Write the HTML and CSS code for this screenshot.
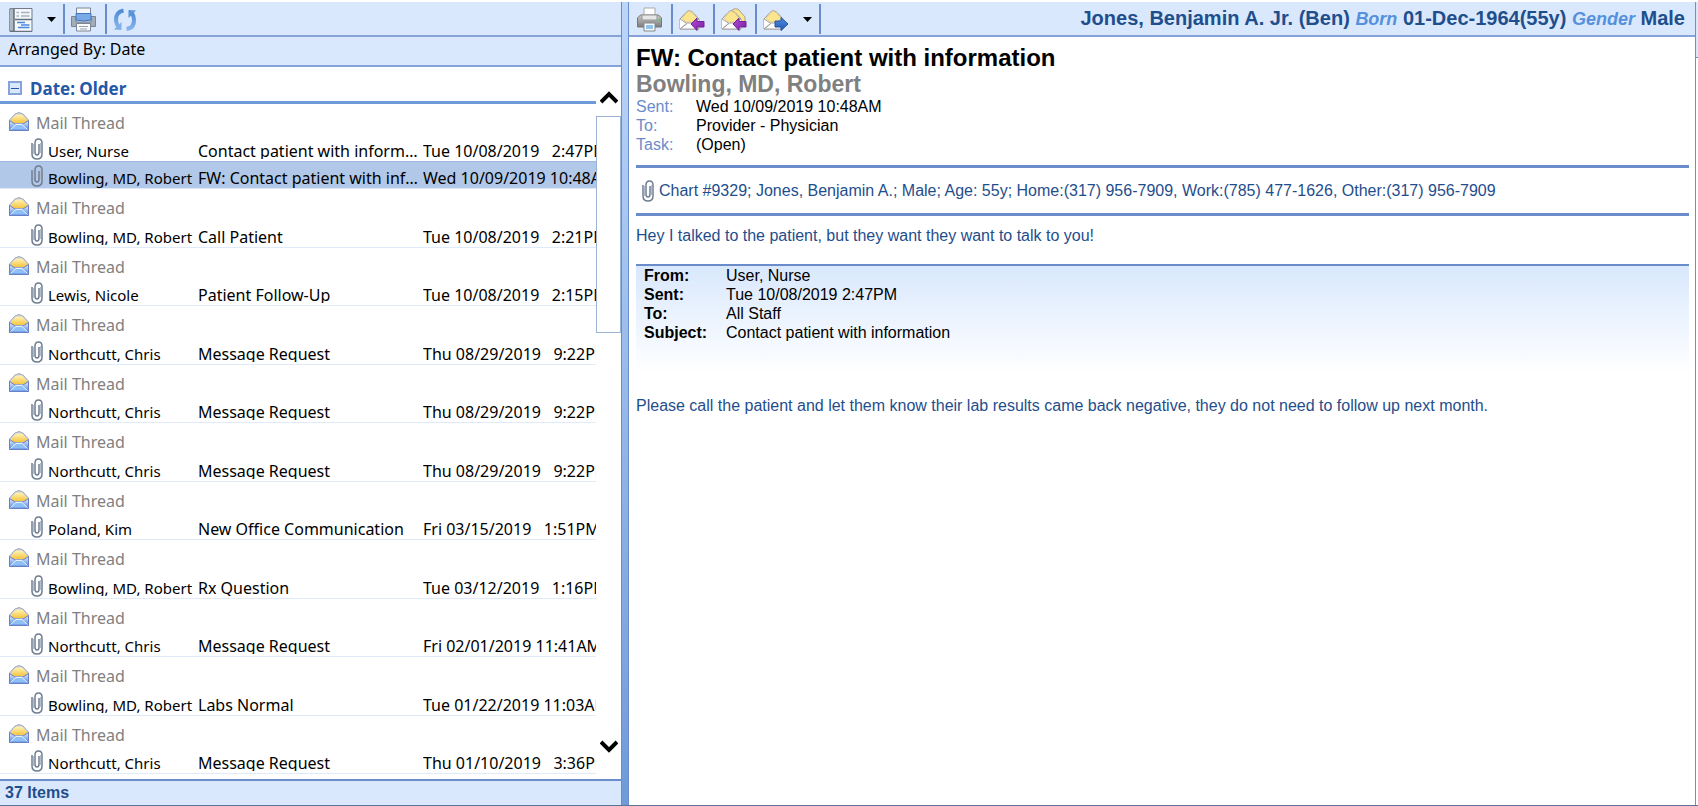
FILE: index.html
```html
<!DOCTYPE html>
<html lang="en">
<head>
<meta charset="utf-8">
<title>Mail</title>
<link rel="stylesheet" href="styles.css">
</head>
<body>
<svg class="defs" aria-hidden="true">
  <defs>
    <linearGradient id="gBlue" x1="0" y1="0" x2="0" y2="1"><stop offset="0" stop-color="#e2f2ff"/><stop offset="1" stop-color="#4f80da"/></linearGradient>
    <linearGradient id="gGold" x1="0" y1="0" x2="0" y2="1"><stop offset="0" stop-color="#fff3b8"/><stop offset="1" stop-color="#f5c540"/></linearGradient>
    <linearGradient id="gPurple" x1="0" y1="0" x2="1" y2="1"><stop offset="0" stop-color="#b04fd8"/><stop offset="1" stop-color="#7a1ea3"/></linearGradient>
    <linearGradient id="gArrow" x1="0" y1="0" x2="0" y2="1"><stop offset="0" stop-color="#4d92e2"/><stop offset="1" stop-color="#2358b4"/></linearGradient>
    <linearGradient id="gGrey" x1="0" y1="0" x2="0" y2="1"><stop offset="0" stop-color="#c9c9c9"/><stop offset="1" stop-color="#7d7d7d"/></linearGradient>
    <linearGradient id="gRefresh" x1="0" y1="0" x2="0" y2="1"><stop offset="0" stop-color="#4f8bd6"/><stop offset="1" stop-color="#86b4ea"/></linearGradient>
  </defs>
  <symbol id="mail" viewBox="0 0 20 20">
    <path d="M.5 8 6 2Q10-1 14 2L19.500 8V18.500H.5Z" fill="#c9cfdb" stroke="#a3abba"/>
    <path d="M2 7.500 7 2.500H13L18 7.500V11H2Z" fill="url(#gGold)"/>
    <path d="M.5 8.500 6 12H14L19.500 8.500V18.500H.5Z" fill="url(#gBlue)" stroke="#6a7fc8"/>
    <path d="M1.500 17.500 7 12.500H13L18.500 17.500" fill="#8fc0f5" stroke="#e6f2ff"/>
  </symbol>
  <symbol id="clip" viewBox="0 0 12 22">
    <path d="M1 5V16Q1 21 6 21T11 16V5Q11 1 7.500 1T4 5V14Q4 17 6 17T8 14V6" fill="none" stroke="#6f7d92" stroke-width="1.500"/>
    <path d="M2.500 6V16M9.500 5V15" stroke="#b3bcc9" fill="none"/>
  </symbol>
  <symbol id="letter" viewBox="0 0 26 24">
    <path d="M1 11 7 4.500Q10 1 14 4.500L20 11V21H1Z" fill="#f4f4f4" stroke="#999"/>
    <path d="M3 10.500 8 4.500Q10.500 2.500 13 4.500L18 10.500 14 14H7Z" fill="#fbe68e" stroke="#ead08a"/>
    <path d="M1 11 8 15.500 1 21M20 11 13 15.500 20 21M1 21 8 15H13L20 21Z" fill="#fff" stroke="#a5a5a5"/>
  </symbol>
</svg>
<main class="app">
  <section class="list-pane" aria-label="Messages">
    <div class="toolbar">
      <button class="tool plain" aria-label="View"><svg width="24" height="24" viewBox="0 0 24 24"><path d="M1 .5H23V23.500H1Z" fill="#f3f8fd" stroke="#717a86"/><path d="M.5 1H4.500V23H.5Z" fill="#aeb8c3" stroke="#8d97a3"/><path d="M5 1V23M6 11.500H23M1 23.500H23" stroke="#68717d" stroke-width="1.500"/><path d="M7.500 4.500H10M12 4.500H20.500M7.500 8H10M12 8H20.500" stroke="#a9b1ba" stroke-width="1.500"/><path d="M8 14.500H16M9 19.500H20.500M12 17H20.500" stroke="#4c86dd" stroke-width="1.500"/></svg></button>
      <button class="tool drop" aria-label="View options"><svg width="10" height="6" viewBox="0 0 10 6"><path d="M0 0H9L4.500 5Z"/></svg></button>
      <button class="tool" aria-label="Print list"><svg width="25" height="25" viewBox="0 0 25 25"><path d="M.5 9.500H5V15H20V9.500H24.500V19.500H.5Z" fill="#a3adb9" stroke="#7c8795"/><path d="M5.500 1H19.500V9H5.500Z" fill="#f4f8fd" stroke="#7b8796"/><path d="M5 6.500H20V13Q12.500 15 5 13Z" fill="#7aa9e8" stroke="#4474bd"/><path d="M5.500 16.500H19.500V24H5.500Z" fill="#fafbfd" stroke="#7b8796"/><path d="M8 19.500H17M9 22H16" stroke="#97a1ad"/></svg></button>
      <button class="tool plain" aria-label="Refresh"><svg width="24" height="24" viewBox="0 0 24 24"><path d="M10.500 2.500Q2.500 4 3 12.500 3.500 17 5.500 19" fill="none" stroke="url(#gRefresh)" stroke-width="4"/><path d="M1 21.500 8.500 22V14Z" fill="#7fb0e8"/><path d="M13.500 21Q21.500 20 21 11.500 20.500 7 18.500 5" fill="none" stroke="url(#gRefresh)" stroke-width="4"/><path d="M15.500 2 23 2.500 15.500 10Z" fill="#5b94da"/></svg></button>
    </div>
    <div class="arranged">Arranged By: Date</div>
    <div class="list-area">
      <div class="threads">
        <h2 class="group"><button class="collapse" aria-label="Collapse"></button>Date: Older</h2>
        <div id="rows"></div>
      </div>
      <div class="scroll">
        <button class="arrow" aria-label="Scroll up"><svg width="18" height="14" viewBox="0 0 18 14"><path d="M1 12 9 4 17 12" fill="none" stroke="#000" stroke-width="4"/></svg></button>
        <div class="thumb"></div>
        <button class="arrow down" aria-label="Scroll down"><svg width="18" height="14" viewBox="0 0 18 14"><path d="M1 2 9 10 17 2" fill="none" stroke="#000" stroke-width="4"/></svg></button>
      </div>
    </div>
    <footer class="count">37 Items</footer>
  </section>
  <div class="splitter"></div>
  <section class="read-pane" aria-label="Message">
    <div class="toolbar">
      <button class="tool first" aria-label="Print"><svg width="25" height="25" viewBox="0 0 25 25"><path d="M7 1H18V9H7Z" fill="#fff" stroke="#aaa"/><path d="M3.500 8H21.500L24.500 11V20H.5V11Z" fill="url(#gGrey)" stroke="#777"/><path d="M5 8H20V13H5Z" fill="#e6e6e6" stroke="#999"/><path d="M21.500 13h2" stroke="#43d05a" stroke-width="2"/><path d="M7 16H18V24H7Z" fill="#f4f9ff" stroke="#888"/><path d="M9 18H16V22H9Z" fill="#8fc4ee"/></svg></button>
      <button class="tool" aria-label="Reply"><svg width="26" height="24" viewBox="0 0 26 24"><use href="#letter"/><path d="M12 16 18 10V13.500H25V19H18V22.500Z" fill="url(#gPurple)" stroke="#74209a"/></svg></button>
      <button class="tool" aria-label="Reply all"><svg width="26" height="24" viewBox="0 0 26 24"><path d="M10 3Q14-1 18 2L24 9V17H14Z" fill="#fbe68e" stroke="#a8a294"/><use href="#letter"/><path d="M12 16 18 10V13.500H25V19H18V22.500Z" fill="url(#gPurple)" stroke="#74209a"/></svg></button>
      <button class="tool plain" aria-label="Forward"><svg width="26" height="24" viewBox="0 0 26 24"><use href="#letter"/><path d="M25 16 18 9.500V13H12V19H18V22.500Z" fill="url(#gArrow)" stroke="#2453a0"/></svg></button>
      <button class="tool drop" aria-label="Forward options"><svg width="10" height="6" viewBox="0 0 10 6"><path d="M0 0H9L4.500 5Z"/></svg></button>
      <p class="patient"><b>Jones, Benjamin A. Jr. (Ben)</b> <i>Born</i> <b>01-Dec-1964(55y)</b> <i>Gender</i> <b>Male</b></p>
    </div>
    <article class="message">
      <h1 class="subject">FW: Contact patient with information</h1>
      <p class="sender">Bowling, MD, Robert</p>
      <dl class="meta">
        <dt>Sent:</dt><dd>Wed 10/09/2019 10:48AM</dd>
        <dt>To:</dt><dd>Provider - Physician</dd>
        <dt>Task:</dt><dd>(Open)</dd>
      </dl>
      <a class="chart" href="#chart"><svg width="12" height="22"><use href="#clip"/></svg>Chart #9329; Jones, Benjamin A.; Male; Age: 55y; Home:(317) 956-7909, Work:(785) 477-1626, Other:(317) 956-7909</a>
      <p class="body">Hey I talked to the patient, but they want they want to talk to you!</p>
      <dl class="meta quoted">
        <dt>From:</dt><dd>User, Nurse</dd>
        <dt>Sent:</dt><dd>Tue 10/08/2019 2:47PM</dd>
        <dt>To:</dt><dd>All Staff</dd>
        <dt>Subject:</dt><dd>Contact patient with information</dd>
      </dl>
      <p class="body">Please call the patient and let them know their lab results came back negative, they do not need to follow up next month.</p>
    </article>
  </section>
  <div class="edge"></div>
</main>
<script src="list.js"></script>
</body>
</html>
```

FILE: list.js
```js
const threads = [
  [["User, Nurse", "Contact patient with information", "Tue 10/08/2019", "  2:47PM"],
   ["Bowling, MD, Robert", "FW: Contact patient with information", "Wed 10/09/2019", "10:48AM", true]],
  [["Bowling, MD, Robert", "Call Patient", "Tue 10/08/2019", "  2:21PM"]],
  [["Lewis, Nicole", "Patient Follow-Up", "Tue 10/08/2019", "  2:15PM"]],
  [["Northcutt, Chris", "Message Request", "Thu 08/29/2019", "  9:22PM"]],
  [["Northcutt, Chris", "Message Request", "Thu 08/29/2019", "  9:22PM"]],
  [["Northcutt, Chris", "Message Request", "Thu 08/29/2019", "  9:22PM"]],
  [["Poland, Kim", "New Office Communication", "Fri 03/15/2019", "  1:51PM"]],
  [["Bowling, MD, Robert", "Rx Question", "Tue 03/12/2019", "  1:16PM"]],
  [["Northcutt, Chris", "Message Request", "Fri 02/01/2019", "11:41AM"]],
  [["Bowling, MD, Robert", "Labs Normal", "Tue 01/22/2019", "11:03AM"]],
  [["Northcutt, Chris", "Message Request", "Thu 01/10/2019", "  3:36PM"]]
];
document.getElementById("rows").innerHTML = threads.map(items => `
  <section class="thread">
    <h3 class="thread-head"><svg width="20" height="20"><use href="#mail"/></svg><span>Mail Thread</span></h3>
    ${items.map(([from, subject, day, time, selected]) => `
    <div class="item${selected ? " selected" : ""}">
      <svg class="attachment" width="12" height="22"><use href="#clip"/></svg>
      <span class="from">${from}</span><span class="topic">${subject}</span><span class="when">${day} ${time}</span>
    </div>`).join("")}
  </section>`).join("");
```

FILE: styles.css
```css
* { box-sizing: border-box; margin: 0; padding: 0; }
body { font: 16px/19px "Liberation Sans", Arial, sans-serif; color: #000; background: #fff; }
button { border: 0; background: none; font: inherit; }
.defs { position: absolute; width: 0; height: 0; }
.app { display: flex; height: 100vh; padding-top: 2px; border-bottom: 1px solid #5f7396; overflow: hidden; }
.list-pane { width: 622px; flex: none; display: flex; flex-direction: column; border-right: 1px solid #6a8ccb; font-family: "Noto Sans", Tahoma, sans-serif; }
.toolbar { display: flex; flex: none; align-items: center; height: 35px; padding-left: 9px; background: #d9e8fd; border-bottom: 2px solid #86a3d9; }
.read-pane .toolbar { padding-left: 8px; }
.tool { display: flex; align-items: center; width: 42px; height: 30px; padding: 2px 0 0 6px; border-right: 2px solid #6a8ccb; }
.tool.plain { width: 32px; border-right: 0; }
.tool.plain:first-child { width: 24px; padding-left: 0; }
.tool.first { width: 36px; padding-left: 0; }
.tool.drop { width: 32px; padding-left: 14px; }
.arranged { flex: none; height: 30px; padding: 1px 8px; background: #d9e8fd; border-bottom: 2px solid #86a3d9; line-height: 22px; }
.list-area { flex: 1; display: flex; min-height: 0; }
.threads { flex: 1; min-width: 0; overflow: hidden; }
.group { display: flex; align-items: center; gap: 8px; height: 37px; padding: 8px 0 0 8px; border-bottom: 3px solid #6f9ad9; font-size: 17px; color: #2357a8; }
.collapse { display: flex; align-items: center; justify-content: center; width: 14px; height: 14px; border: 2px solid #86a3d9; background: #d9e8fd; }
.collapse::before { content: ""; width: 8px; height: 1px; background: #2357a8; }
.thread { border-bottom: 1px solid #dfeafa; }
.thread-head { display: flex; gap: 7px; height: 32px; padding: 8px 0 0 9px; font-size: 16px; line-height: 22px; font-weight: 400; color: #808080; }
.thread:nth-child(odd) .thread-head { height: 31px; }
.item { display: grid; grid-template-columns: 12px 155px 225px 1fr; align-items: start; height: 26px; padding-left: 31px; white-space: pre; overflow: hidden; }
.item span { height: 24px; line-height: 32px; overflow: hidden; }
.item .from { padding-left: 5px; font-size: 15px; }
.attachment { margin-top: 3px; }
.item .topic { text-overflow: ellipsis; }
.selected { height: 27px; background: #b2c8e8; border-top: 1px solid #9db8e2; }
.selected span { height: 26px; }
.scroll { display: flex; flex-direction: column; align-items: center; width: 25px; }
.arrow { height: 49px; padding-top: 14px; }
.thumb { width: 25px; height: 217px; border: 1px solid #9ab2d4; }
.arrow.down { margin-top: auto; padding: 0 0 12px; }
.count { flex: none; height: 26px; padding: 2px 5px; background: #d9e8fd; border-top: 2px solid #6a8ccb; font: bold 16px/19px "Liberation Sans", Arial, sans-serif; color: #1f4e8c; }
.splitter { flex: none; width: 6px; background: linear-gradient(#bcd6fa, #6f9ad9); }
.read-pane { flex: 1; min-width: 0; border-left: 1px solid #6a8ccb; border-right: 1px solid #8c8c8c; }
.patient { margin-left: auto; padding-right: 10px; font-size: 20px; color: #1f4e8c; white-space: nowrap; }
.patient i { font-size: 18px; font-weight: bold; color: #5590dc; }
.message { padding: 7px 6px 0 7px; }
.subject { font-size: 24px; line-height: 27px; }
.sender { font-size: 23px; line-height: 26px; font-weight: bold; color: #808080; }
.meta { display: grid; grid-template-columns: 60px 1fr; }
.meta dt { color: #6a8ccb; }
.chart { display: flex; align-items: center; gap: 5px; height: 51px; margin: 11px 0 10px; padding-left: 6px; border: solid #6a8ccb; border-width: 3px 0; color: #1f4e8c; text-decoration: none; }
.body { color: #1f4e8c; }
.quoted { grid-template-columns: 82px 1fr; height: 110px; margin: 19px 0 22px; padding-left: 8px; align-content: start; border-top: 2px solid #6a8ccb; background: linear-gradient(#d9e8fd, #fff); }
.quoted dt { font-weight: bold; color: #000; }
.edge { width: 2px; height: 56px; background: #d9e8fd; border-bottom: 1px solid #6a8ccb; }
```
